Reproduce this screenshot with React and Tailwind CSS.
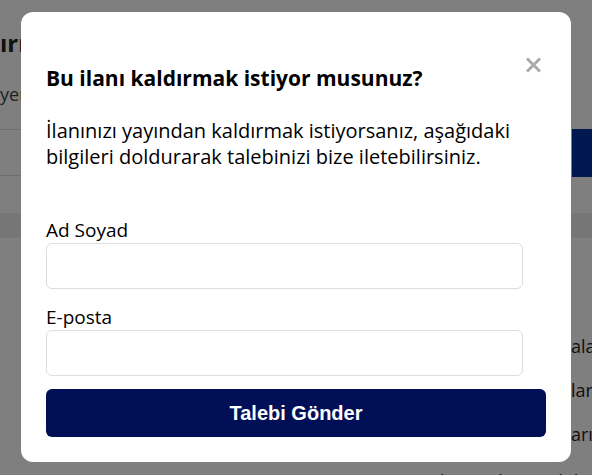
import { useState } from 'react';

const CloseIcon = () => (
  <svg width="17" height="16" viewBox="0 0 17 16" fill="none">
    <path d="M2 1.5L15 14.5M15 1.5L2 14.5" stroke="#aaaaaa" strokeWidth="3" />
  </svg>
);

const App = () => {
  const [name, setName] = useState("");
  const [email, setEmail] = useState("");

  return (
    <div className="relative h-[475px] w-[592px] overflow-hidden bg-white font-['Open_Sans',sans-serif] text-[#222222]">
      {/* Arkadaki sayfa */}
      <div className="pt-[28px]">
        <h1 className="-ml-[16px] whitespace-nowrap text-[24px] font-bold leading-[30px]">Kırıkkale İlanları</h1>
        <p className="mt-[24px] whitespace-nowrap text-[18px] leading-[24px] text-[#444444]">yeni ilan ver</p>

        <div className="mt-[23px] flex h-[48px] items-start">
          <div className="h-[47px] flex-1 border-y border-[#dcdcdc]"></div>
          <div className="h-[48px] w-[20px] bg-[#0030a0]"></div>
        </div>

        <div className="mt-[36px] h-[25px] bg-[#ececec]"></div>

        <div className="ml-[571px] mt-[86px] flex flex-col whitespace-nowrap text-[18px] leading-[44px]">
          <span>alanları</span>
          <span>ları</span>
          <span>arıza</span>
        </div>
        <p className="ml-[440px] mt-[13px] whitespace-nowrap text-[18px] leading-[24px]">bi için iletişim bilgileri</p>
      </div>

      {/* Karartma ve modal */}
      <div className="absolute inset-0 bg-black/50 pt-[12px]">
        <div className="mx-auto h-[450px] w-[550px] rounded-xl bg-white px-[25px] pt-[52px] text-black">
          <div className="flex items-start justify-between">
            <h2 className="text-[21px] font-bold leading-[28px]">Bu ilanı kaldırmak istiyor musunuz?</h2>
            <button className="-mt-[7px] mr-[4px]">
              <CloseIcon />
            </button>
          </div>

          <p className="mt-[26px] text-[20px] leading-[26px]">
            İlanınızı yayından kaldırmak istiyorsanız, aşağıdaki bilgileri doldurarak talebinizi bize iletebilirsiniz.
          </p>

          <form className="mt-[48px]" onSubmit={(e) => e.preventDefault()}>
            <label className="block text-[19px] leading-[25px]">Ad Soyad</label>
            <input
              className="block h-[46px] w-[477px] rounded-md border border-[#dddddd] px-3 outline-none"
              value={name}
              onChange={(e) => setName(e.target.value)}
            />

            <label className="mt-[16px] block text-[19px] leading-[25px]">E-posta</label>
            <input
              className="block h-[46px] w-[477px] rounded-md border border-[#dddddd] px-3 outline-none"
              value={email}
              onChange={(e) => setEmail(e.target.value)}
            />

            <button
              type="submit"
              className="mt-[13px] flex h-[48px] w-full items-center justify-center rounded-md bg-[#010f57] font-['Liberation_Sans',Arial,sans-serif] text-[20px] font-bold text-white"
            >
              Talebi Gönder
            </button>
          </form>
        </div>
      </div>
    </div>
  );
};

export default App;
